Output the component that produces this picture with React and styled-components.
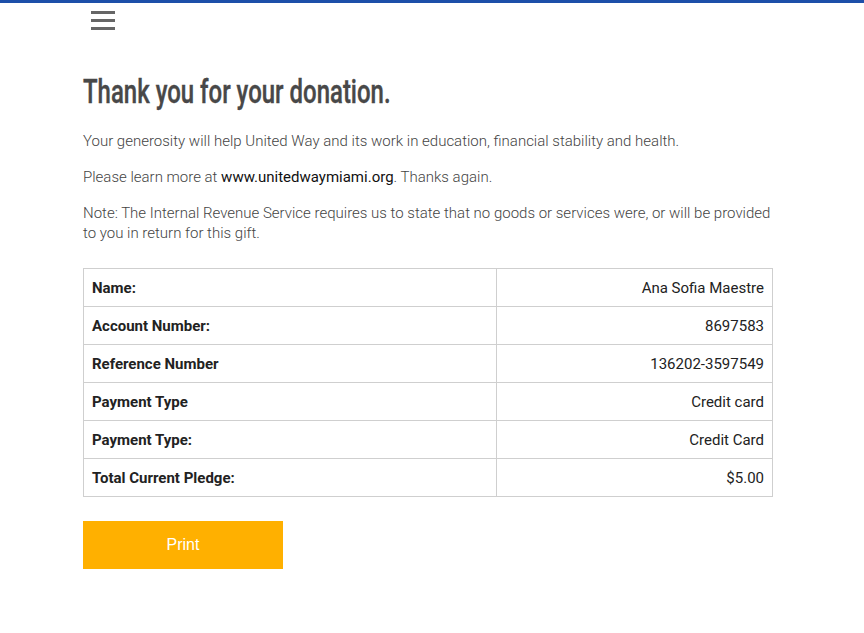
import React from "react";
import styled, { createGlobalStyle } from "styled-components";

const GlobalStyle = createGlobalStyle`
  body {
    margin: 0;
    background: #fff;
    font-family: Roboto, "Liberation Sans", sans-serif;
  }
`;

const rows = [
  { label: "Name:", value: "Ana Sofia Maestre" },
  { label: "Account Number:", value: "8697583" },
  { label: "Reference Number", value: "136202-3597549" },
  { label: "Payment Type", value: "Credit card" },
  { label: "Payment Type:", value: "Credit Card" },
  { label: "Total Current Pledge:", value: "$5.00" },
];

const TopBar = styled.div`
  height: 3px;
  background: #1d4fa9;
`;

const Header = styled.header`
  padding: 8px 0 0 91px;
  height: 30px;
`;

const MenuButton = styled.button`
  display: flex;
  flex-direction: column;
  gap: 5px;
  width: 24px;
  padding: 0;
  border: 0;
  background: none;
  cursor: pointer;
`;

const MenuBar = styled.span`
  display: block;
  height: 3px;
  background: #666;
`;

const Main = styled.main`
  width: 690px;
  padding: 30px 0 0 83px;
`;

const Title = styled.h1`
  margin: 0 0 20px;
  height: 40px;
  font-family: Roboto, "Liberation Sans", sans-serif;
  font-weight: 500;
  font-size: 34px;
  line-height: 40px;
  color: #484848;
  white-space: nowrap;
  -webkit-text-stroke: 0.4px #484848;
  transform: scaleX(0.705);
  transform-origin: left center;
`;

const Text = styled.p`
  margin: 0 0 16px;
  font-size: 15px;
  line-height: 20px;
  font-weight: 300;
  color: #444;
`;

const Link = styled.a`
  color: #111;
  font-weight: 400;
  text-decoration: none;
`;

const Table = styled.table`
  width: 100%;
  margin-top: 25px;
  border-collapse: collapse;
  font-size: 15px;
  color: #222;
`;

const Cell = styled.td`
  height: 38px;
  padding: 0 8px;
  border: 1px solid #cfcfcf;
  box-sizing: border-box;
  text-align: ${(p) => (p.$right ? "right" : "left")};
  font-weight: ${(p) => (p.$bold ? 700 : 400)};
  width: ${(p) => (p.$right ? "276px" : "auto")};
`;

const PrintButton = styled.button`
  margin-top: 24px;
  width: 200px;
  height: 48px;
  border: 0;
  background: #ffb000;
  color: #fff;
  font-family: "Liberation Sans", Arial, sans-serif;
  font-size: 16px;
  cursor: pointer;
`;

export default function App() {
  return (
    <>
      <GlobalStyle />
      <TopBar />
      <Header>
        <MenuButton aria-label="Menu">
          <MenuBar />
          <MenuBar />
          <MenuBar />
        </MenuButton>
      </Header>
      <Main>
        <Title>Thank you for your donation.</Title>
        <Text>
          Your generosity will help United Way and its work in education,
          financial stability and health.
        </Text>
        <Text>
          Please learn more at{" "}
          <Link href="#">www.unitedwaymiami.org</Link>. Thanks again.
        </Text>
        <Text>
          Note: The Internal Revenue Service requires us to state that no goods
          or services were, or will be provided to you in return for this gift.
        </Text>
        <Table>
          <tbody>
            {rows.map((r) => (
              <tr key={r.label}>
                <Cell $bold>{r.label}</Cell>
                <Cell $right>{r.value}</Cell>
              </tr>
            ))}
          </tbody>
        </Table>
        <PrintButton onClick={() => window.print()}>Print</PrintButton>
      </Main>
    </>
  );
}
